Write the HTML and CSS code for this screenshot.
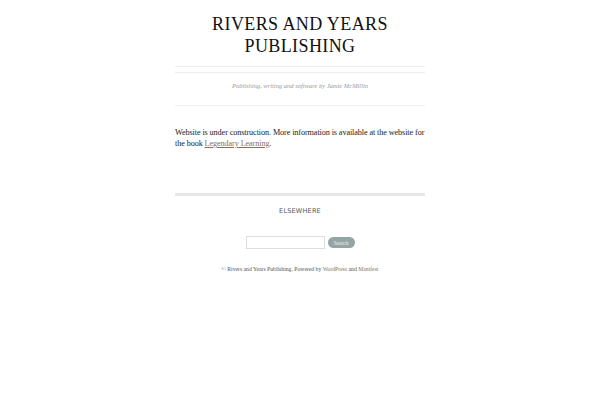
FILE: index.html
```html
<!DOCTYPE html>
<html>
<head>
<meta charset="utf-8">
<link rel="stylesheet" href="styles.css">
</head>
<body>
<div class="wrap">
  <header class="masthead">
    <h1 class="site-title">Rivers and Years Publishing</h1>
    <div class="rule-double"></div>
    <p class="tagline">Publishing, writing and software by Jamie McMillin</p>
  </header>
  <main class="content">
    <p>Website is under construction. More information is available at the website for the book <a href="#">Legendary Learning</a>.</p>
  </main>
  <section class="elsewhere">
    <h2>Elsewhere</h2>
  </section>
  <form class="search">
    <input type="text" class="search-input">
    <button type="button" class="search-btn">Search</button>
  </form>
  <footer class="footer">© Rivers and Years Publishing. Powered by <a href="#">WordPress</a> and <a href="#">Manifest</a></footer>
</div>
</body>
</html>
```
FILE: styles.css
```css
html, body { margin: 0; padding: 0; background: #fff; }
body { font-family: "Liberation Serif", "Times New Roman", serif; color: #333; }
.wrap { width: 250px; margin: 0 auto; padding-top: 13px; }
.site-title {
  margin: 0;
  font-weight: normal;
  text-transform: uppercase;
  font-size: 18px;
  line-height: 22px;
  letter-spacing: 0.4px;
  text-align: center;
  color: #111;
}
.rule-double {
  margin-top: 9px;
  height: 5px;
  border-top: 1px solid #ececec;
  border-bottom: 1px solid #ececec;
}
.tagline {
  margin: 0;
  padding: 9px 0 16px;
  font-style: italic;
  font-size: 6.5px;
  color: #999;
  text-align: center;
  border-bottom: 1px solid #eee;
}
.content { padding-top: 21px; }
.content p {
  margin: 0;
  font-size: 8.2px;
  line-height: 11px;
  letter-spacing: -0.1px;
  color: #222;
}
.content a { color: #8a7158; text-decoration: underline; }
.elsewhere {
  margin-top: 44px;
  border-top: 3px solid #e8e8e8;
  padding-top: 11px;
}
.elsewhere h2 {
  margin: 0;
  font-family: "DejaVu Sans", "Liberation Sans", sans-serif;
  font-weight: normal;
  font-size: 6.5px;
  letter-spacing: 0.2px;
  text-transform: uppercase;
  text-align: center;
  color: #555;
}
.search {
  display: flex;
  justify-content: center;
  align-items: center;
  gap: 3px;
  margin-top: 21px;
}
.search-input {
  box-sizing: border-box;
  width: 79px;
  height: 13px;
  border: 1px solid #ddd;
  padding: 0;
  margin: 0;
}
.search-btn {
  box-sizing: border-box;
  width: 27px;
  height: 11px;
  border: none;
  border-radius: 6px;
  background: #93a6a5;
  color: #eef2f2;
  font-family: "Liberation Serif", serif;
  font-size: 5.5px;
  padding: 0;
  margin: 0;
}
.footer {
  margin-top: 17px;
  text-align: center;
  font-size: 5.7px;
  color: #555;
}
.footer a { color: #8a7158; text-decoration: none; }
```
